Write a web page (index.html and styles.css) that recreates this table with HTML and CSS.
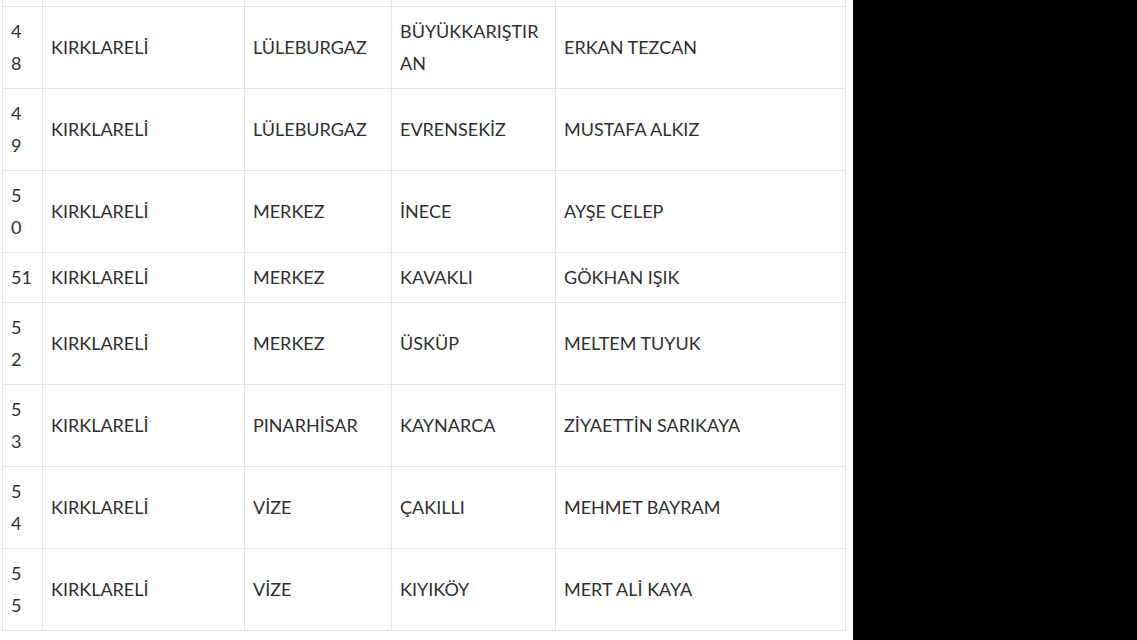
FILE: index.html
```html
<!DOCTYPE html>
<html lang="tr">
<head>
<meta charset="utf-8">
<title>Tablo</title>
<link rel="stylesheet" href="styles.css">
</head>
<body>
<div class="page">
  <div class="table-wrap">
    <table class="data-table">
      <colgroup>
        <col class="c-no">
        <col class="c-il">
        <col class="c-ilce">
        <col class="c-koy">
        <col class="c-ad">
      </colgroup>
      <tbody>
        <tr class="partial"><td></td><td></td><td></td><td></td><td></td></tr>
        <tr><td class="no">48</td><td>KIRKLARELİ</td><td>LÜLEBURGAZ</td><td>BÜYÜKKARIŞTIRAN</td><td>ERKAN TEZCAN</td></tr>
        <tr><td class="no">49</td><td>KIRKLARELİ</td><td>LÜLEBURGAZ</td><td>EVRENSEKİZ</td><td>MUSTAFA ALKIZ</td></tr>
        <tr><td class="no">50</td><td>KIRKLARELİ</td><td>MERKEZ</td><td>İNECE</td><td>AYŞE CELEP</td></tr>
        <tr><td class="no no-wrap">51</td><td>KIRKLARELİ</td><td>MERKEZ</td><td>KAVAKLI</td><td>GÖKHAN IŞIK</td></tr>
        <tr><td class="no">52</td><td>KIRKLARELİ</td><td>MERKEZ</td><td>ÜSKÜP</td><td>MELTEM TUYUK</td></tr>
        <tr><td class="no">53</td><td>KIRKLARELİ</td><td>PINARHİSAR</td><td>KAYNARCA</td><td>ZİYAETTİN SARIKAYA</td></tr>
        <tr><td class="no">54</td><td>KIRKLARELİ</td><td>VİZE</td><td>ÇAKILLI</td><td>MEHMET BAYRAM</td></tr>
        <tr><td class="no">55</td><td>KIRKLARELİ</td><td>VİZE</td><td>KIYIKÖY</td><td>MERT ALİ KAYA</td></tr>
      </tbody>
    </table>
  </div>
</div>
</body>
</html>
```

FILE: styles.css
```css
html, body {
  margin: 0;
  padding: 0;
  background: #000;
}

.page {
  width: 853px;
  height: 640px;
  background: #fff;
  overflow: hidden;
}

.table-wrap {
  padding-left: 2px;
  margin-top: -1px;
}

.data-table {
  border-collapse: collapse;
  table-layout: fixed;
  width: 843px;
  font-family: Lato, "Open Sans", sans-serif;
  font-size: 18px;
  line-height: 32px;
  color: #2f2f2f;
}

.c-no { width: 40px; }
.c-il { width: 202px; }
.c-ilce { width: 147px; }
.c-koy { width: 164px; }
.c-ad { width: 290px; }

.data-table td {
  border: 1px solid #e4e4e4;
  padding: 8px 8px 9px 8px;
  vertical-align: middle;
  text-align: left;
  overflow-wrap: anywhere;
  word-break: break-all;
}

.data-table tr.partial td {
  padding: 0;
  height: 6px;
  line-height: 0;
}

.data-table td.no {
  padding-right: 12px;
}

.data-table td.no-wrap {
  white-space: nowrap;
  padding-right: 0;
}
```
